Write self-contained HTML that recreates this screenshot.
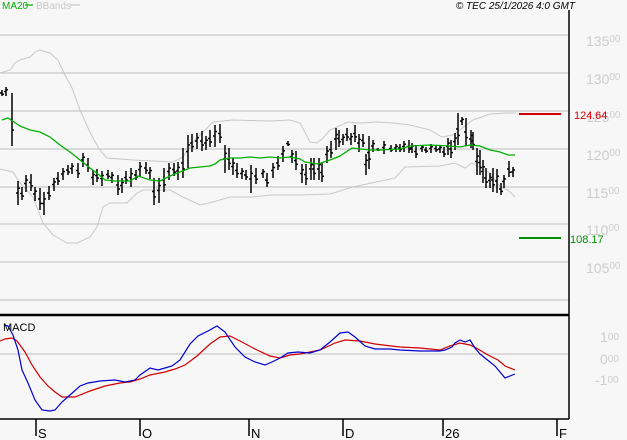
<!DOCTYPE html>
<html><head><meta charset="utf-8"><style>
html,body{margin:0;padding:0;background:#f7f7f7;}
svg{display:block;font-family:"Liberation Sans",sans-serif;}
</style></head><body>
<svg id="s" width="627" height="440" viewBox="0 0 627 440" xmlns="http://www.w3.org/2000/svg">
<rect width="627" height="440" fill="#f7f7f7"/>
<g stroke="#c8c8c8" stroke-width="1.2">
<line x1="0" y1="35" x2="569" y2="35"/><line x1="0" y1="73" x2="569" y2="73"/>
<line x1="0" y1="111" x2="569" y2="111"/><line x1="0" y1="149" x2="569" y2="149"/>
<line x1="0" y1="187" x2="569" y2="187"/><line x1="0" y1="224" x2="569" y2="224"/>
<line x1="0" y1="262" x2="569" y2="262"/><line x1="0" y1="300" x2="569" y2="300"/>
<line x1="0" y1="354" x2="569" y2="354"/>
</g>
<g fill="#cccccc" font-size="14">
<text x="586" y="46">135<tspan font-size="10" dy="-4">00</tspan></text>
<text x="586" y="84">130<tspan font-size="10" dy="-4">00</tspan></text>
<text x="586" y="122">125<tspan font-size="10" dy="-4">00</tspan></text>
<text x="586" y="160">120<tspan font-size="10" dy="-4">00</tspan></text>
<text x="586" y="198">115<tspan font-size="10" dy="-4">00</tspan></text>
<text x="586" y="235">110<tspan font-size="10" dy="-4">00</tspan></text>
<text x="586" y="273">105<tspan font-size="10" dy="-4">00</tspan></text>
<text x="600" y="342">1<tspan font-size="10" dy="-2">00</tspan></text>
<text x="600" y="364">0<tspan font-size="10" dy="-2">00</tspan></text>
<text x="595" y="385">-1<tspan font-size="10" dy="-2">00</tspan></text>
</g>
<polyline fill="none" stroke="#c8c8c8" stroke-width="1" points="0,73 10,70 15,63 20,60 30,57 35,52 40,50 50,53 58,60 65,75 72,88 80,110 88,128 94,140 100,150 107,158 133,160 173,162 183,157 195,140 213,122 233,120 270,121 290,120 300,123 310,142 317,143 323,138 330,130 348,122 360,123 377,122 393,123 410,125 430,130 442,137 453,135 473,120 490,114 507,113 516,113"/>
<polyline fill="none" stroke="#c8c8c8" stroke-width="1" points="0,169 13,172 20,183 33,197 43,223 53,235 67,243 77,243 90,237 97,227 103,207 110,203 127,203 137,193 143,190 170,190 183,197 200,205 213,202 230,197 253,197 270,195 300,195 330,194 353,187 395,178 405,167 440,166 455,163 465,168 472,163 490,173 500,187 508,190 515,197"/>
<g id="bars" stroke="#000" stroke-width="1.5"></g>
<polyline fill="none" stroke="#00b000" stroke-width="1.3" points="2,120 8,118 14,122 20,126 30,130 40,132 50,137 60,145 70,152 80,160 90,168 98,174 105,180 115,181 130,181 138,176 150,180 160,181 170,176 180,172 190,168 200,167 210,166 215,164 220,160 230,158 240,158 250,157 260,158 270,157 280,158 290,157 300,159 305,162 318,164 330,160 340,156 352,148 370,150 380,150 400,149 410,146 430,145 450,146 460,147 470,145 480,146 490,150 500,152 508,155 515,155"/>
<line x1="519" y1="114" x2="561" y2="114" stroke="#d00000" stroke-width="2"/>
<line x1="519" y1="238" x2="561" y2="238" stroke="#009000" stroke-width="2"/>
<text x="574" y="119" fill="#e00000" font-size="11">124<tspan font-size="10">.</tspan>64</text>
<text x="570" y="243" fill="#009000" font-size="11">108.17</text>
<line x1="0" y1="315" x2="569" y2="315" stroke="#000" stroke-width="2.5"/>
<line x1="569" y1="10" x2="569" y2="419" stroke="#000" stroke-width="1.5"/>
<line x1="0" y1="419" x2="569" y2="419" stroke="#000" stroke-width="1.5"/>
<g stroke="#000" stroke-width="1.5">
<line x1="36" y1="419" x2="36" y2="436"/><line x1="140" y1="419" x2="140" y2="436"/>
<line x1="249" y1="419" x2="249" y2="436"/><line x1="343" y1="419" x2="343" y2="436"/>
<line x1="443" y1="419" x2="443" y2="436"/><line x1="557" y1="419" x2="557" y2="436"/>
</g>
<g font-size="13" fill="#000">
<text x="38" y="438">S</text><text x="142" y="438">O</text><text x="251" y="438">N</text>
<text x="345" y="438">D</text><text x="445" y="438">26</text><text x="559" y="438">F</text>
</g>
<polyline fill="none" stroke="#d00000" stroke-width="1.2" points="0,341 5,339 12,338 17,341 25,352 32,365 40,377 48,386 55,392 62,397 75,397 90,391 105,386 120,383 130,382 140,379 150,375 165,372 175,369 185,365 197,356 210,344 220,337 230,336 240,341 255,349 270,356 280,358 290,355 300,354 320,350 335,343 345,340 360,341 375,344 400,347 420,348 440,350 450,346 460,343 470,345 478,349 488,355 498,360 505,366 515,370"/>
<polyline fill="none" stroke="#0000d0" stroke-width="1.2" points="4,325 8,326 13,335 18,350 22,370 28,383 35,400 42,410 50,411 55,410 62,402 70,395 80,386 88,383 100,381 115,380 125,382 135,380 140,375 150,368 158,370 165,368 172,366 180,360 190,344 198,336 208,331 217,326 225,332 235,347 245,357 255,362 265,365 272,362 280,358 288,353 298,352 310,353 320,350 330,342 340,333 348,332 355,337 365,346 375,349 390,349 400,350 420,351 440,351 445,350 452,347 455,343 460,340 465,342 470,340 475,348 480,354 485,358 490,362 495,366 500,372 505,378 510,376 515,374"/>
<text x="3" y="331" font-size="11" fill="#000">MACD</text>
<text x="2" y="9" font-size="10" fill="#00b000">MA20</text>
<line x1="25" y1="5" x2="33" y2="5" stroke="#00b000" stroke-width="1.2"/>
<text x="36" y="9" font-size="10" fill="#c8c8c8">BBands</text>
<line x1="70" y1="5" x2="80" y2="5" stroke="#c8c8c8" stroke-width="1.2"/>
<text x="575" y="9" font-size="10" font-style="italic" fill="#000" text-anchor="end">© TEC 25/1/2026 4:0 GMT</text>
</svg>
<script>
var d=[[2,90,96],[6,87,96],[12,93,146],[18,181,205],[22,187,200],[26,175,192],[31,174,191],[35,187,201],[40,188,210],[44,192,215],[49,186,200],[54,178,191],[58,172,185],[63,168,180],[68,165,175],[72,163,174],[78,163,178],[83,153,167],[88,158,172],[93,170,185],[97,169,182],[102,171,186],[108,170,179],[112,172,183],[118,175,195],[122,178,193],[126,171,184],[131,168,187],[136,170,180],[140,162,177],[146,162,174],[150,167,179],[154,178,205],[159,178,203],[164,168,192],[169,163,180],[174,163,176],[178,162,180],[183,148,178],[188,135,168],[192,134,152],[197,133,149],[202,131,151],[206,136,150],[210,130,147],[215,125,147],[220,124,143],[225,145,173],[229,148,170],[233,158,175],[237,163,178],[242,168,179],[246,170,180],[251,165,193],[256,168,184],[263,169,178],[267,173,187],[273,163,178],[278,156,170],[283,146,162],[288,141,146],[292,150,163],[296,151,170],[302,164,183],[306,164,185],[311,158,180],[314,158,180],[319,158,180],[322,163,182],[327,146,163],[331,141,158],[336,128,150],[339,130,147],[343,134,145],[347,128,141],[351,133,145],[355,125,142],[359,134,152],[363,134,147],[366,154,175],[369,136,169],[373,140,152],[378,148,151],[384,141,154],[391,145,152],[396,144,152],[400,144,152],[404,141,152],[409,140,153],[412,143,153],[416,145,158],[422,145,152],[426,147,153],[431,144,153],[436,145,152],[440,145,153],[444,147,157],[448,138,155],[451,140,158],[455,133,150],[458,113,145],[462,117,125],[466,118,146],[471,130,148],[473,132,150],[477,148,175],[480,150,175],[483,160,183],[486,168,188],[490,173,188],[493,168,192],[497,169,193],[501,183,195],[504,175,188],[509,161,177],[513,167,177]];
var g=document.getElementById('bars'),h='';
d.forEach(function(b,i){var m=(b[1]+b[2])/2,c=(i%2?b[1]+(b[2]-b[1])*0.3:b[1]+(b[2]-b[1])*0.7);
h+='<line x1="'+b[0]+'" y1="'+b[1]+'" x2="'+b[0]+'" y2="'+b[2]+'"/><line x1="'+b[0]+'" y1="'+c+'" x2="'+(b[0]+2)+'" y2="'+c+'"/><line x1="'+(b[0]-2)+'" y1="'+m+'" x2="'+b[0]+'" y2="'+m+'"/>';});
g.innerHTML=h;
</script>
</body></html>
